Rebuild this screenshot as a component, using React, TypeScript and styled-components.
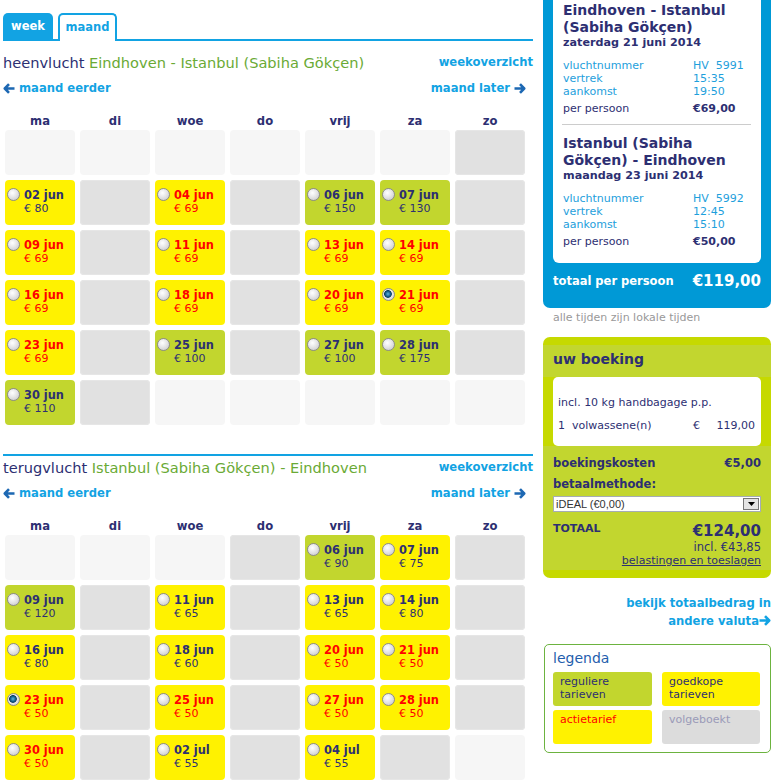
import React from 'react';
import styled, { createGlobalStyle } from 'styled-components';

const navy = '#2d2f72';
const sky = '#12a3e3';

const GlobalStyle = createGlobalStyle`
  body {
    margin: 0;
    background: #fff;
    font-family: 'DejaVu Sans', Verdana, sans-serif;
    color: ${navy};
  }
`;

type Kind = 'out' | 'none' | 'reg' | 'cheap' | 'promo';
type Day = { kind: Kind; date?: string; price?: string; selected?: boolean };

const o: Day = { kind: 'out' };
const n: Day = { kind: 'none' };
const reg = (date: string, price: string): Day => ({ kind: 'reg', date, price });
const cheap = (date: string, price: string): Day => ({ kind: 'cheap', date, price });
const promo = (date: string, price: string, selected = false): Day => ({
  kind: 'promo',
  date,
  price,
  selected,
});

const outbound: Day[] = [
  o, o, o, o, o, o, n,
  cheap('02 jun', '80'), n, promo('04 jun', '69'), n, reg('06 jun', '150'), reg('07 jun', '130'), n,
  promo('09 jun', '69'), n, promo('11 jun', '69'), n, promo('13 jun', '69'), promo('14 jun', '69'), n,
  promo('16 jun', '69'), n, promo('18 jun', '69'), n, promo('20 jun', '69'), promo('21 jun', '69', true), n,
  promo('23 jun', '69'), n, reg('25 jun', '100'), n, reg('27 jun', '100'), reg('28 jun', '175'), n,
  reg('30 jun', '110'), n, o, o, o, o, o,
];

const inbound: Day[] = [
  o, o, o, n, reg('06 jun', '90'), cheap('07 jun', '75'), n,
  reg('09 jun', '120'), n, cheap('11 jun', '65'), n, cheap('13 jun', '65'), cheap('14 jun', '80'), n,
  cheap('16 jun', '80'), n, cheap('18 jun', '60'), n, promo('20 jun', '50'), promo('21 jun', '50'), n,
  promo('23 jun', '50', true), n, promo('25 jun', '50'), n, promo('27 jun', '50'), promo('28 jun', '50'), n,
  promo('30 jun', '50'), n, cheap('02 jul', '55'), n, cheap('04 jul', '55'), n, o,
];

const weekdays = ['ma', 'di', 'woe', 'do', 'vrij', 'za', 'zo'];

const cellBg: Record<Kind, string> = {
  out: '#f6f6f6',
  none: '#e1e1e1',
  reg: '#c2d62e',
  cheap: '#fff200',
  promo: '#fff200',
};

const ArrowLeft = ({ color = '#1d68b3' }: { color?: string }) => (
  <svg width="12" height="11" viewBox="0 0 12 11">
    <path
      d="M6 1.2 L1.8 5.5 L6 9.8 M2.2 5.5 H11.5"
      fill="none"
      stroke={color}
      strokeWidth="2.6"
      strokeLinejoin="round"
    />
  </svg>
);

const ArrowRight = ({ color = '#1d68b3' }: { color?: string }) => (
  <svg width="12" height="11" viewBox="0 0 12 11">
    <path
      d="M6 1.2 L10.2 5.5 L6 9.8 M0.5 5.5 H9.8"
      fill="none"
      stroke={color}
      strokeWidth="2.6"
      strokeLinejoin="round"
    />
  </svg>
);

const Calendar = ({
  label,
  route,
  days,
  first,
}: {
  label: string;
  route: string;
  days: Day[];
  first?: boolean;
}) => (
  <Section $first={first}>
    <SectionHead $top={first ? 11 : 1}>
      <RouteTitle>
        {label} <Green>{route}</Green>
      </RouteTitle>
      <TextLink>weekoverzicht</TextLink>
    </SectionHead>
    <MonthNav>
      <TextLink>
        <ArrowLeft />
        maand eerder
      </TextLink>
      <TextLink>
        maand later
        <ArrowRight />
      </TextLink>
    </MonthNav>
    <WeekDays>
      {weekdays.map((d) => (
        <span key={d}>{d}</span>
      ))}
    </WeekDays>
    <Grid>
      {days.map((d, i) => (
        <Cell key={i} $kind={d.kind}>
          {d.date && (
            <>
              <Radio $on={d.selected} />
              <CellText $red={d.kind === 'promo'}>
                <DateLabel>{d.date}</DateLabel>
                <Price>€ {d.price}</Price>
              </CellText>
            </>
          )}
        </Cell>
      ))}
    </Grid>
  </Section>
);

const FlightBlock = ({
  title,
  date,
  number,
  dep,
  arr,
  price,
}: {
  title: React.ReactNode;
  date: string;
  number: string;
  dep: string;
  arr: string;
  price: string;
}) => (
  <div>
    <FlightTitle>{title}</FlightTitle>
    <FlightDate>{date}</FlightDate>
    <Details>
      <span>vluchtnummer</span>
      <span>{number}</span>
      <span>vertrek</span>
      <span>{dep}</span>
      <span>aankomst</span>
      <span>{arr}</span>
    </Details>
    <PerPerson>
      <span>per persoon</span>
      <b>{price}</b>
    </PerPerson>
  </div>
);

export default function App() {
  return (
    <>
      <GlobalStyle />
      <Page>
        <Main>
          <Tabs>
            <Tab $w={50}>week</Tab>
            <Tab $w={59} $active>
              maand
            </Tab>
          </Tabs>
          <Calendar
            first
            label="heenvlucht"
            route="Eindhoven - Istanbul (Sabiha Gökçen)"
            days={outbound}
          />
          <Calendar
            label="terugvlucht"
            route="Istanbul (Sabiha Gökçen) - Eindhoven"
            days={inbound}
          />
        </Main>

        <Side>
          <Summary>
            <SummaryCard>
              <FlightBlock
                title={
                  <>
                    Eindhoven - Istanbul
                    <br />
                    (Sabiha Gökçen)
                  </>
                }
                date="zaterdag 21 juni 2014"
                number="HV  5991"
                dep="15:35"
                arr="19:50"
                price="€69,00"
              />
              <Divider />
              <FlightBlock
                title={
                  <>
                    Istanbul (Sabiha
                    <br />
                    Gökçen) - Eindhoven
                  </>
                }
                date="maandag 23 juni 2014"
                number="HV  5992"
                dep="12:45"
                arr="15:10"
                price="€50,00"
              />
            </SummaryCard>
            <SummaryTotal>
              <span>totaal per persoon</span>
              <BigAmount>€119,00</BigAmount>
            </SummaryTotal>
          </Summary>
          <Note>alle tijden zijn lokale tijden</Note>

          <Booking>
            <BookingHead>uw boeking</BookingHead>
            <BookingItems>
              <div>incl. 10 kg handbagage p.p.</div>
              <ItemRow>
                <Pre>1  volwassene(n)</Pre>
                <ItemAmount>
                  <span>€</span>
                  <span>119,00</span>
                </ItemAmount>
              </ItemRow>
            </BookingItems>
            <BookingBody>
              <CostRow>
                <span>boekingskosten</span>
                <span>€5,00</span>
              </CostRow>
              <PayLabel>betaalmethode:</PayLabel>
              <FakeSelect>
                <span>iDEAL (€0,00)</span>
                <SelectButton>
                  <svg width="7" height="4" viewBox="0 0 7 4">
                    <path d="M0 0 H7 L3.5 4 Z" fill="#000" />
                  </svg>
                </SelectButton>
              </FakeSelect>
              <TotalRow>
                <TotalLabel>TOTAAL</TotalLabel>
                <TotalRight>
                  <BigAmount>€124,00</BigAmount>
                  <div>incl. €43,85</div>
                  <TaxLink>belastingen en toeslagen</TaxLink>
                </TotalRight>
              </TotalRow>
            </BookingBody>
          </Booking>

          <CurrencyLink>
            bekijk totaalbedrag in
            <br />
            andere valuta
            <ArrowRight color={sky} />
          </CurrencyLink>

          <Legend>
            <LegendTitle>legenda</LegendTitle>
            <LegendGrid>
              <LegendItem $bg="#c2d62e">reguliere tarieven</LegendItem>
              <LegendItem $bg="#fff200">goedkope tarieven</LegendItem>
              <LegendItem $bg="#fff200" $color="#ff0000">
                actietarief
              </LegendItem>
              <LegendItem $bg="#dcdcdc" $color="#9a9ab8">
                volgeboekt
              </LegendItem>
            </LegendGrid>
          </Legend>
        </Side>
      </Page>
    </>
  );
}

const Page = styled.div`
  display: flex;
  align-items: flex-start;
  width: 778px;
`;

const Main = styled.div`
  width: 530px;
  padding-left: 3px;
`;

const Tabs = styled.div`
  display: flex;
  gap: 5px;
  margin-top: 13px;
  height: 26px;
  border-bottom: 2px solid ${sky};
`;

const Tab = styled.div<{ $active?: boolean; $w: number }>`
  box-sizing: border-box;
  width: ${(p) => p.$w}px;
  height: ${(p) => (p.$active ? '28px' : '26px')};
  border-radius: 5px 5px 0 0;
  font-size: 11.5px;
  font-weight: bold;
  text-align: center;
  line-height: ${(p) => (p.$active ? '25px' : '27px')};
  background: ${(p) => (p.$active ? '#fff' : sky)};
  color: ${(p) => (p.$active ? sky : '#fff')};
  border: ${(p) => (p.$active ? `2px solid ${sky}` : 'none')};
  border-bottom: none;
`;

const Section = styled.div<{ $first?: boolean }>`
  margin-top: ${(p) => (p.$first ? '0' : '29px')};
  border-top: ${(p) => (p.$first ? 'none' : `2px solid ${sky}`)};
`;

const SectionHead = styled.div<{ $top: number }>`
  display: flex;
  justify-content: space-between;
  align-items: center;
  height: 20px;
  margin-top: ${(p) => p.$top}px;
`;

const RouteTitle = styled.div`
  font-size: 14.6px;
  color: ${navy};
`;

const Green = styled.span`
  color: #6aaa35;
`;

const TextLink = styled.a`
  display: inline-flex;
  align-items: center;
  gap: 4px;
  font-size: 11.6px;
  font-weight: bold;
  color: ${sky};
  text-decoration: none;
  cursor: pointer;
`;

const MonthNav = styled.div`
  display: flex;
  justify-content: space-between;
  align-items: center;
  height: 16px;
  margin-top: 8px;
  padding-right: 7px;
`;

const WeekDays = styled.div`
  display: grid;
  grid-template-columns: repeat(7, 70px);
  column-gap: 5px;
  margin: 17px 0 0 2px;
  line-height: 16px;
  font-size: 11.6px;
  font-weight: bold;
  text-align: center;
`;

const Grid = styled.div`
  display: grid;
  grid-template-columns: repeat(7, 70px);
  grid-auto-rows: 45px;
  gap: 5px;
  margin: 1px 0 0 2px;
`;

const Cell = styled.div<{ $kind: Kind }>`
  display: flex;
  align-items: flex-start;
  gap: 4px;
  padding: 8px 0 0 2px;
  border-radius: 4px;
  background: ${(p) => cellBg[p.$kind]};
  box-shadow: ${(p) => (p.$kind === 'none' ? 'inset 0 0 0 1px #e6e6e6' : 'none')};
`;

const Radio = styled.span<{ $on?: boolean }>`
  flex: none;
  box-sizing: border-box;
  width: 13px;
  height: 13px;
  border-radius: 50%;
  border: 1px solid #8c8c8c;
  background: ${(p) =>
    p.$on
      ? 'radial-gradient(circle at 45% 45%, #5fb6e0 0, #15608f 2.5px, #0d3f63 3.5px, #e8e8e8 4.2px, #c8c8c8 100%)'
      : 'radial-gradient(circle at 40% 35%, #ffffff 0, #e6e6e6 45%, #c2c2c2 100%)'};
`;

const CellText = styled.div<{ $red?: boolean }>`
  margin-top: 1px;
  color: ${(p) => (p.$red ? '#ff0000' : navy)};
  line-height: 13px;
`;

const DateLabel = styled.div`
  font-size: 11.4px;
  font-weight: bold;
`;

const Price = styled.div`
  font-size: 11px;
`;

const Side = styled.div`
  width: 228px;
  margin-left: 10px;
`;

const Summary = styled.div`
  background: #0099d6;
  border-radius: 0 0 7px 7px;
  padding: 0 10px;
`;

const SummaryCard = styled.div`
  background: #fff;
  border-radius: 0 0 6px 6px;
  padding: 2px 10px 14px;
`;

const FlightTitle = styled.div`
  font-size: 14px;
  font-weight: bold;
  line-height: 17px;
`;

const FlightDate = styled.div`
  font-size: 11.2px;
  font-weight: bold;
  line-height: 14px;
`;

const Details = styled.div`
  display: grid;
  grid-template-columns: 130px auto;
  margin-top: 9px;
  font-size: 11px;
  line-height: 13px;
  color: #1ea0dc;
  white-space: pre;
`;

const PerPerson = styled.div`
  display: grid;
  grid-template-columns: 130px auto;
  margin-top: 4px;
  font-size: 11px;
  line-height: 14px;
`;

const Divider = styled.div`
  height: 1px;
  margin: 8px 0 10px -1px;
  background: #cccccc;
`;

const SummaryTotal = styled.div`
  display: flex;
  justify-content: space-between;
  align-items: center;
  height: 20px;
  padding: 8px 0 17px;
  color: #fff;
  font-size: 11.5px;
  font-weight: bold;
`;

const BigAmount = styled.div`
  font-size: 15px;
  font-weight: bold;
  line-height: 20px;
`;

const Note = styled.div`
  margin: 3px 0 0 10px;
  font-size: 11px;
  line-height: 14px;
  color: #999999;
`;

const Booking = styled.div`
  margin-top: 12px;
  padding: 8px 0;
  border-radius: 7px;
  background: #c6d900;
`;

const BookingHead = styled.div`
  padding: 6px 10px 9px;
  background: #c2d62f;
  font-size: 14px;
  font-weight: bold;
  line-height: 17px;
`;

const BookingItems = styled.div`
  margin: 0 10px;
  padding: 19px 6px 13px 5px;
  border-radius: 5px;
  background: #fff;
  font-size: 11px;
  line-height: 14px;
`;

const ItemRow = styled.div`
  display: flex;
  justify-content: space-between;
  margin-top: 9px;
`;

const Pre = styled.span`
  white-space: pre;
`;

const ItemAmount = styled.span`
  display: flex;
  justify-content: space-between;
  width: 62px;
`;

const BookingBody = styled.div`
  padding: 10px 10px 3px;
  background: #c2d62f;
`;

const CostRow = styled.div`
  display: flex;
  justify-content: space-between;
  font-size: 11.5px;
  font-weight: bold;
  line-height: 14px;
`;

const PayLabel = styled.div`
  margin-top: 7px;
  font-size: 11.5px;
  font-weight: bold;
  line-height: 14px;
`;

const FakeSelect = styled.div`
  display: flex;
  align-items: center;
  justify-content: space-between;
  box-sizing: border-box;
  height: 16px;
  margin-top: 5px;
  padding: 0 1px 0 2px;
  background: #fff;
  border: 1px solid #a5acb5;
  font-family: 'Liberation Sans', Arial, sans-serif;
  font-size: 11px;
  color: #333;
`;

const SelectButton = styled.span`
  display: flex;
  align-items: center;
  justify-content: center;
  box-sizing: border-box;
  width: 16px;
  height: 12px;
  background: #e4e4e4;
  border: 1px solid #777;
`;

const TotalRow = styled.div`
  display: flex;
  justify-content: space-between;
  align-items: flex-start;
  margin-top: 9px;
`;

const TotalLabel = styled.div`
  font-size: 11px;
  font-weight: bold;
  line-height: 16px;
`;

const TotalRight = styled.div`
  text-align: right;
  font-size: 11.5px;
  line-height: 13px;
`;

const TaxLink = styled.a`
  display: block;
  font-size: 11px;
  color: ${navy};
  text-decoration: underline;
`;

const CurrencyLink = styled.div`
  margin-top: 16px;
  text-align: right;
  font-size: 11.6px;
  font-weight: bold;
  line-height: 18px;
  color: ${sky};

  svg {
    vertical-align: -1px;
  }
`;

const Legend = styled.div`
  margin: 14px 0 0 1px;
  padding: 4px 8px 8px;
  border: 1px solid #6cb33f;
  border-radius: 5px;
`;

const LegendTitle = styled.div`
  font-size: 14px;
  line-height: 18px;
  color: #1f5ead;
  margin-bottom: 5px;
`;

const LegendGrid = styled.div`
  display: grid;
  grid-template-columns: 99px 98px;
  grid-auto-rows: 34px;
  column-gap: 10px;
  row-gap: 4px;
`;

const LegendItem = styled.div<{ $bg: string; $color?: string }>`
  padding: 3px 7px;
  border-radius: 3px;
  background: ${(p) => p.$bg};
  color: ${(p) => p.$color || navy};
  font-size: 11px;
  line-height: 13px;
`;
